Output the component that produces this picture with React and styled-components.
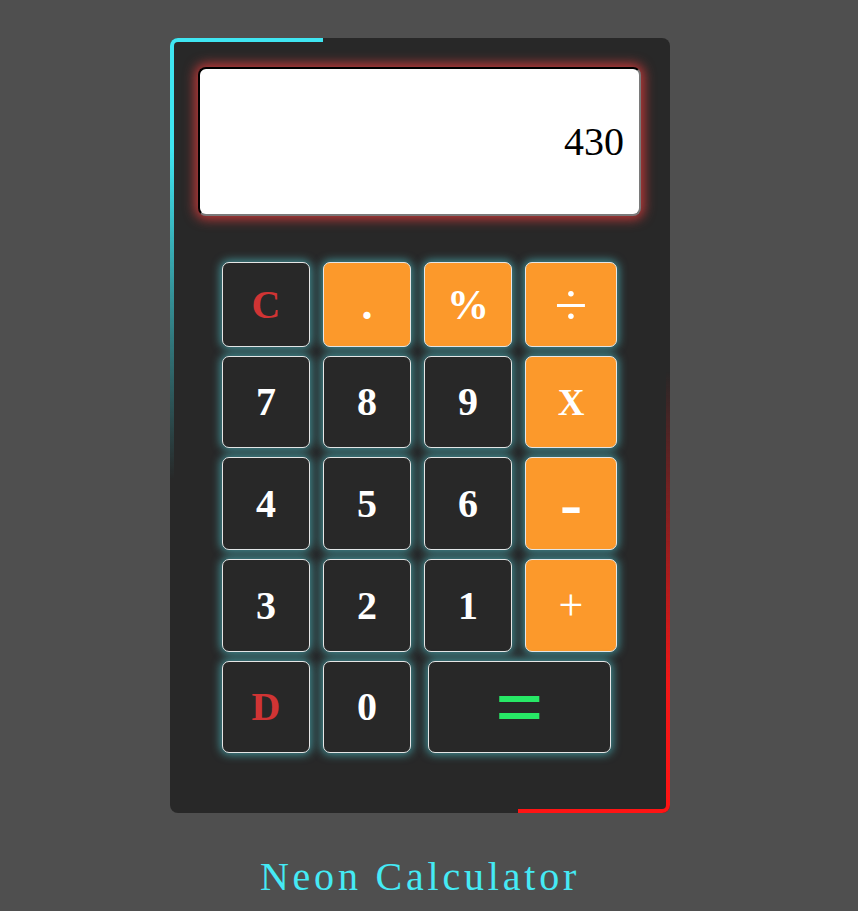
import React from "react";
import styled, { createGlobalStyle } from "styled-components";

const keys = [
  { label: "C", tone: "red" },
  { label: ".", tone: "orange", size: 44 },
  { label: "%", tone: "orange", size: 42 },
  { label: "÷", tone: "orange", size: 60, weight: 400 },
  { label: "7" },
  { label: "8" },
  { label: "9" },
  { label: "X", tone: "orange", size: 37 },
  { label: "4" },
  { label: "5" },
  { label: "6" },
  { label: "-", tone: "orange", size: 66 },
  { label: "3" },
  { label: "2" },
  { label: "1" },
  { label: "+", tone: "orange", size: 44, weight: 400 },
  { label: "D", tone: "red" },
  { label: "0" },
  { label: "=", tone: "green", size: 86, wide: true },
];

function App() {
  return (
    <>
      <GlobalStyle />
      <Page>
        <Calculator>
          <Display>430</Display>
          <Keypad>
            {keys.map((key) => (
              <Key
                key={key.label}
                $tone={key.tone}
                $size={key.size}
                $weight={key.weight}
                $wide={key.wide}
              >
                {key.label}
              </Key>
            ))}
          </Keypad>
        </Calculator>
        <Title>Neon Calculator</Title>
      </Page>
    </>
  );
}

export default App;

const GlobalStyle = createGlobalStyle`
  body {
    margin: 0;
    background: #4f4f4f;
    font-family: "Liberation Serif", "Times New Roman", serif;
  }
`;

const Page = styled.div`
  display: flex;
  flex-direction: column;
  align-items: center;
  padding: 38px 18px 0 0;
  min-height: 911px;
  box-sizing: border-box;
`;

const Calculator = styled.div`
  position: relative;
  width: 500px;
  height: 775px;
  box-sizing: border-box;
  padding: 29px 29px 0 28px;
  background: #282828;
  border-radius: 8px;

  &::before,
  &::after {
    content: "";
    position: absolute;
    width: 30.5%;
    height: 57%;
    box-sizing: border-box;
    border: 4px solid transparent;
  }

  &::before {
    top: 0;
    left: 0;
    border-right: 0;
    border-bottom: 0;
    border-top-left-radius: 8px;
    background: linear-gradient(#282828, #282828) padding-box,
      linear-gradient(to bottom, #3fe6f2 0%, #3fe6f2 25%, rgba(63, 230, 242, 0) 100%) border-box;
  }

  &::after {
    bottom: 0;
    right: 0;
    border-left: 0;
    border-top: 0;
    border-bottom-right-radius: 8px;
    background: linear-gradient(#282828, #282828) padding-box,
      linear-gradient(to top, #ff1414 0%, #f01818 30%, rgba(240, 24, 24, 0) 100%) border-box;
  }
`;

const Display = styled.div`
  position: relative;
  z-index: 1;
  height: 149px;
  box-sizing: border-box;
  display: flex;
  align-items: center;
  justify-content: flex-end;
  padding-right: 15px;
  background: #fff;
  border: 2px solid;
  border-color: #000 #7a7a7a #7a7a7a #000;
  border-radius: 8px;
  box-shadow: 0 0 12px 3px rgba(225, 60, 60, 0.85);
  font-size: 40px;
  color: #000;
`;

const Keypad = styled.div`
  position: relative;
  z-index: 1;
  display: grid;
  grid-template-columns: 88px 88px 88px 92px;
  grid-template-rows: 85px 92px 93px 93px 92px;
  column-gap: 13px;
  row-gap: 9px;
  justify-content: center;
  margin-top: 46px;
`;

const toneColors = {
  red: { bg: "#282828", fg: "#d03434" },
  orange: { bg: "#fc992b", fg: "#fff" },
  green: { bg: "#282828", fg: "#27e866" },
  dark: { bg: "#282828", fg: "#fff" },
};

const Key = styled.button`
  display: flex;
  align-items: center;
  justify-content: center;
  padding: 0;
  margin: ${(p) => (p.$wide ? "0 6px 0 4px" : "0")};
  grid-column: ${(p) => (p.$wide ? "span 2" : "auto")};
  background: ${(p) => toneColors[p.$tone || "dark"].bg};
  color: ${(p) => toneColors[p.$tone || "dark"].fg};
  border: 1px solid #e6e6e6;
  border-radius: 7px;
  box-shadow: 0 0 8px 2px rgba(80, 205, 215, 0.6);
  font-family: "Liberation Serif", "Times New Roman", serif;
  font-size: ${(p) => p.$size || 40}px;
  font-weight: ${(p) => p.$weight || 700};
  line-height: 1;
  cursor: pointer;
`;

const Title = styled.h1`
  margin: 41px 0 0;
  font-size: 40px;
  font-weight: 400;
  letter-spacing: 3.8px;
  line-height: 46px;
  color: #45eaf5;
`;
